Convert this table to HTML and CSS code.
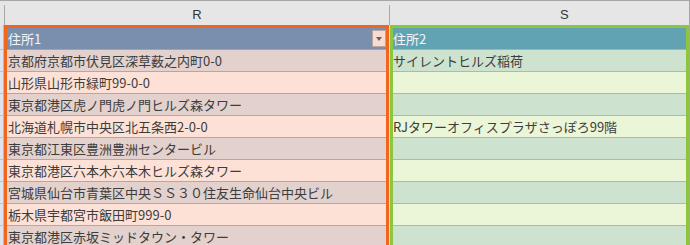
FILE: index.html
```html
<!DOCTYPE html>
<html lang="ja">
<head>
<meta charset="utf-8">
<title>Sheet</title>
<link rel="stylesheet" href="styles.css">
</head>
<body>
<div class="sheet">
  <div class="colhead">
    <div class="ch-corner"></div>
    <div class="ch ch-r">R</div>
    <div class="ch ch-s">S</div>
  </div>
  <div class="grid">
    <div class="rowhead">
      <div class="rh-cap"></div>
      <div class="rh"></div><div class="rh"></div><div class="rh"></div><div class="rh"></div><div class="rh"></div>
      <div class="rh"></div><div class="rh"></div><div class="rh"></div><div class="rh"></div><div class="rh"></div>
    </div>
    <div class="tbl tbl-r">
      <div class="hdr hdr-r"><span class="hdr-text">住所1</span><span class="filter"><span class="tri"></span></span></div>
      <div class="cell r-odd">京都府京都市伏見区深草薮之内町0-0</div>
      <div class="cell r-even">山形県山形市緑町99-0-0</div>
      <div class="cell r-odd">東京都港区虎ノ門虎ノ門ヒルズ森タワー</div>
      <div class="cell r-even">北海道札幌市中央区北五条西2-0-0</div>
      <div class="cell r-odd">東京都江東区豊洲豊洲センタービル</div>
      <div class="cell r-even">東京都港区六本木六本木ヒルズ森タワー</div>
      <div class="cell r-odd">宮城県仙台市青葉区中央ＳＳ３０住友生命仙台中央ビル</div>
      <div class="cell r-even">栃木県宇都宮市飯田町999-0</div>
      <div class="cell r-odd">東京都港区赤坂ミッドタウン・タワー</div>
    </div>
    <div class="gap"></div>
    <div class="tbl tbl-s">
      <div class="hdr hdr-s"><span class="hdr-text">住所2</span></div>
      <div class="cell s-cell s-odd">サイレントヒルズ稲荷</div>
      <div class="cell s-cell s-even"></div>
      <div class="cell s-cell s-odd"></div>
      <div class="cell s-cell s-even">RJタワーオフィスプラザさっぽろ99階</div>
      <div class="cell s-cell s-odd"></div>
      <div class="cell s-cell s-even"></div>
      <div class="cell s-cell s-odd"></div>
      <div class="cell s-cell s-even"></div>
      <div class="cell s-cell s-odd"></div>
    </div>
  </div>
</div>
</body>
</html>
```

FILE: styles.css
```css
html, body {
  margin: 0;
  padding: 0;
  background: #ffffff;
  overflow: hidden;
}

.sheet {
  width: 689px;
  height: 244px;
  border-top: 1px solid #a6a6a6;
  border-right: 1px solid #a6a6a6;
  overflow: hidden;
  background: #e6e6e6;
}

.colhead {
  display: grid;
  grid-template-columns: 4px 386px 299px;
  height: 24px;
  background: #e6e6e6;
}

.ch {
  font-family: "Liberation Sans", Arial, sans-serif;
  font-size: 13px;
  line-height: 20px;
  padding-top: 4px;
  color: #333333;
  white-space: nowrap;
}

.ch-r {
  text-align: center;
  background:
    linear-gradient(#a9a9a9, #a9a9a9) 0 4px / 1px 20px no-repeat,
    linear-gradient(#a9a9a9, #a9a9a9) 100% 4px / 1px 20px no-repeat,
    #e6e6e6;
}

.ch-s {
  padding-left: 170px;
}

.grid {
  display: grid;
  grid-template-columns: 4px 385px 1px 299px;
  height: 220px;
  overflow: hidden;
}

.rowhead {
  background: #dde4ed;
  border-right: 1px solid #b3bcc8;
  box-sizing: border-box;
}

.rh-cap {
  height: 3px;
}

.rh {
  height: 21px;
  border-bottom: 1px solid #b8c1cd;
}

.tbl {
  border-style: solid;
  border-width: 3px 3px 0 3px;
  overflow: hidden;
}

.tbl-r {
  border-color: #f1651f;
}

.tbl-s {
  border-color: #8cc63e;
}

.gap {
  background: #dcdcdc;
}

.hdr {
  height: 21px;
  display: flex;
  justify-content: space-between;
  align-items: flex-start;
  font-family: "Noto Sans CJK JP", "Noto Sans", sans-serif;
  font-size: 13px;
  line-height: 21px;
  color: #f3f5f8;
}

.hdr-r {
  background: #7a8fae;
  border-bottom: 1px solid #a79fae;
  padding-left: 1px;
}

.hdr-s {
  background: #62a3b3;
  border-bottom: 1px solid #94b9b7;
}

.filter {
  width: 14px;
  height: 17px;
  margin-top: 2px;
  box-sizing: border-box;
  border: 1px solid #b5a7a5;
  background: #f6dcd1;
  display: flex;
  align-items: center;
  justify-content: center;
}

.tri {
  width: 0;
  height: 0;
  border-left: 3px solid transparent;
  border-right: 3px solid transparent;
  border-top: 4px solid #6c5f5f;
}

.cell {
  height: 21px;
  line-height: 21px;
  font-family: "Noto Sans CJK JP", "Noto Sans", sans-serif;
  font-size: 13px;
  color: #3d3d3d;
  white-space: nowrap;
  overflow: hidden;
  padding-left: 1px;
}

.r-odd {
  background: #e2d1cc;
  border-bottom: 1px solid #afa8b3;
}

.r-even {
  background: #fde1d6;
  border-bottom: 1px solid #afa8b3;
}

.s-cell {
  padding-left: 0;
}

.s-odd {
  background: #cde3cf;
  border-bottom: 1px solid #9dbfb9;
}

.s-even {
  background: #ebf5d8;
  border-bottom: 1px solid #9dbfb9;
}
```
